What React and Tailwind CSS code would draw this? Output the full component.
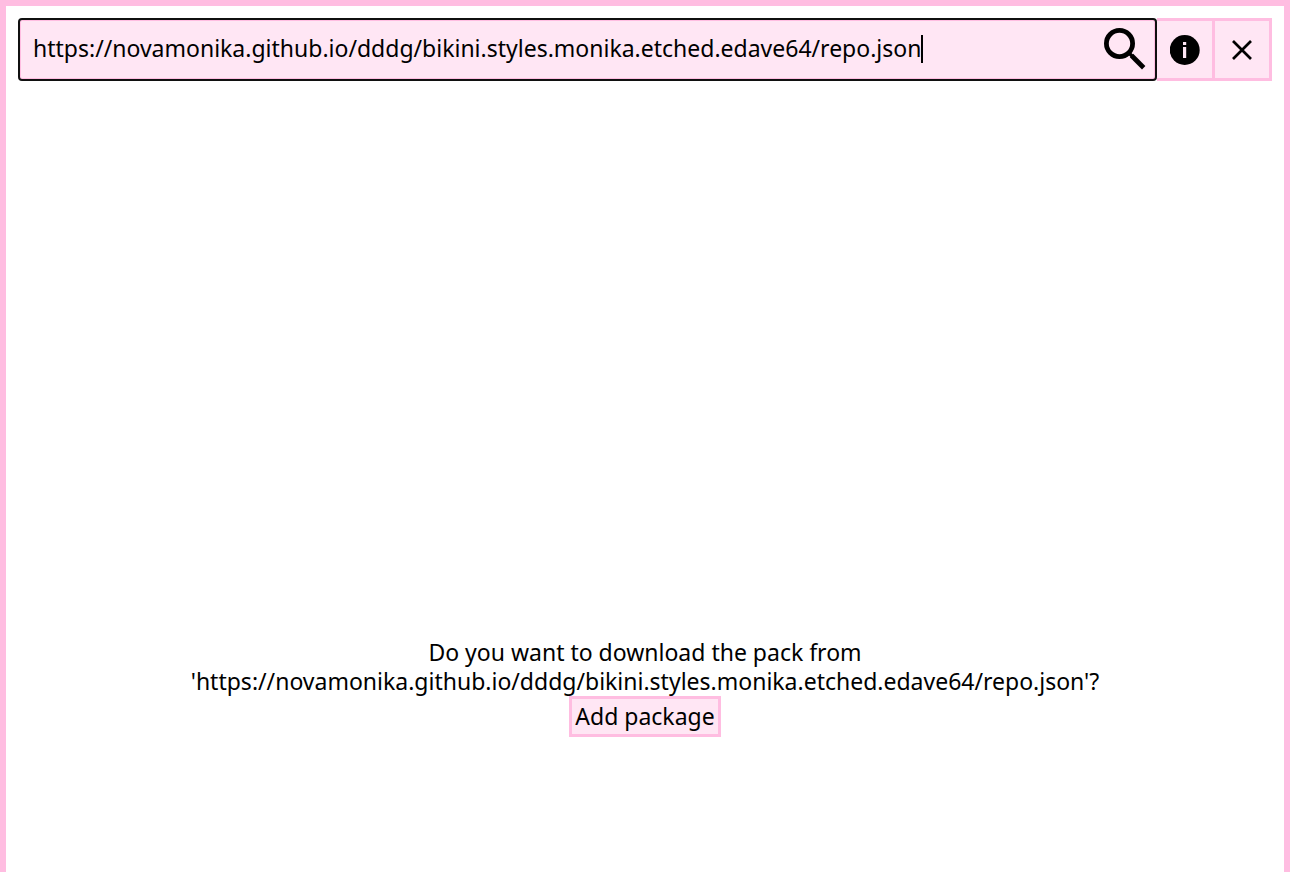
import { useState } from "react";

const REPO = "https://novamonika.github.io/dddg/bikini.styles.monika.etched.edave64/repo.json";

export default function App() {
  const [query, setQuery] = useState(REPO);
  return (
    <div className="flex min-h-screen flex-col border-x-6 border-t-6 border-[#ffbde1] bg-white px-3 pt-3 font-['Noto_Sans',sans-serif] text-[23px] leading-[29px] text-black">
      <header className="flex h-[63px]">
        <label className="flex min-w-0 flex-1 items-center rounded-sm border-2 border-[#101010] bg-[#ffe6f4] pr-[9px] pb-0.5 pl-[13px] inset-ring inset-ring-[#ffbde1]">
          <input
            type="text"
            aria-label="Search or repository URL"
            value={query}
            onChange={(e) => setQuery(e.target.value)}
            className="min-w-0 bg-transparent caret-transparent outline-none [field-sizing:content]"
          />
          <span aria-hidden="true" className="h-7 w-0.5 shrink-0 bg-black" />
          <svg viewBox="0 0 42 42" className="ml-auto size-[42px] shrink-0" fill="none" stroke="black" aria-hidden="true">
            <circle cx="15.5" cy="15.5" r="13.1" strokeWidth="4.8" />
            <path d="M25.5 25.5l3 3" strokeWidth="3.4" />
            <path d="M27.5 27.5l12.2 12.2" strokeWidth="4.8" />
          </svg>
        </label>
        <button type="button" aria-label="Info" className="flex w-[58px] items-center justify-center border-y-3 border-r-3 border-[#ffbde1] bg-[#ffe6f4]">
          <svg viewBox="0 0 30 30" className="size-[30px]" aria-hidden="true">
            <circle cx="14.7" cy="15" r="15" />
            <path d="M13 7h3.2v3H13zM13 12h3.2v11H13z" fill="#ffe6f4" />
          </svg>
        </button>
        <button type="button" aria-label="Close" className="flex w-[57px] items-center justify-center border-y-3 border-r-3 border-[#ffbde1] bg-[#ffe6f4]">
          <svg viewBox="0 0 20 20" className="size-5" aria-hidden="true">
            <path d="M1 1l18 18M19 1L1 19" stroke="black" strokeWidth="2.7" />
          </svg>
        </button>
      </header>
      <div className="grow-8 basis-0" />
      <main className="flex grow-7 basis-0 flex-col items-center justify-center text-center">
        <p>
          Do you want to download the pack from
          <br />
          '{query}'?
        </p>
        <button type="button" className="border-3 border-[#ffbde1] bg-[#ffe6f4] p-[3px]">
          Add package
        </button>
      </main>
    </div>
  );
}
